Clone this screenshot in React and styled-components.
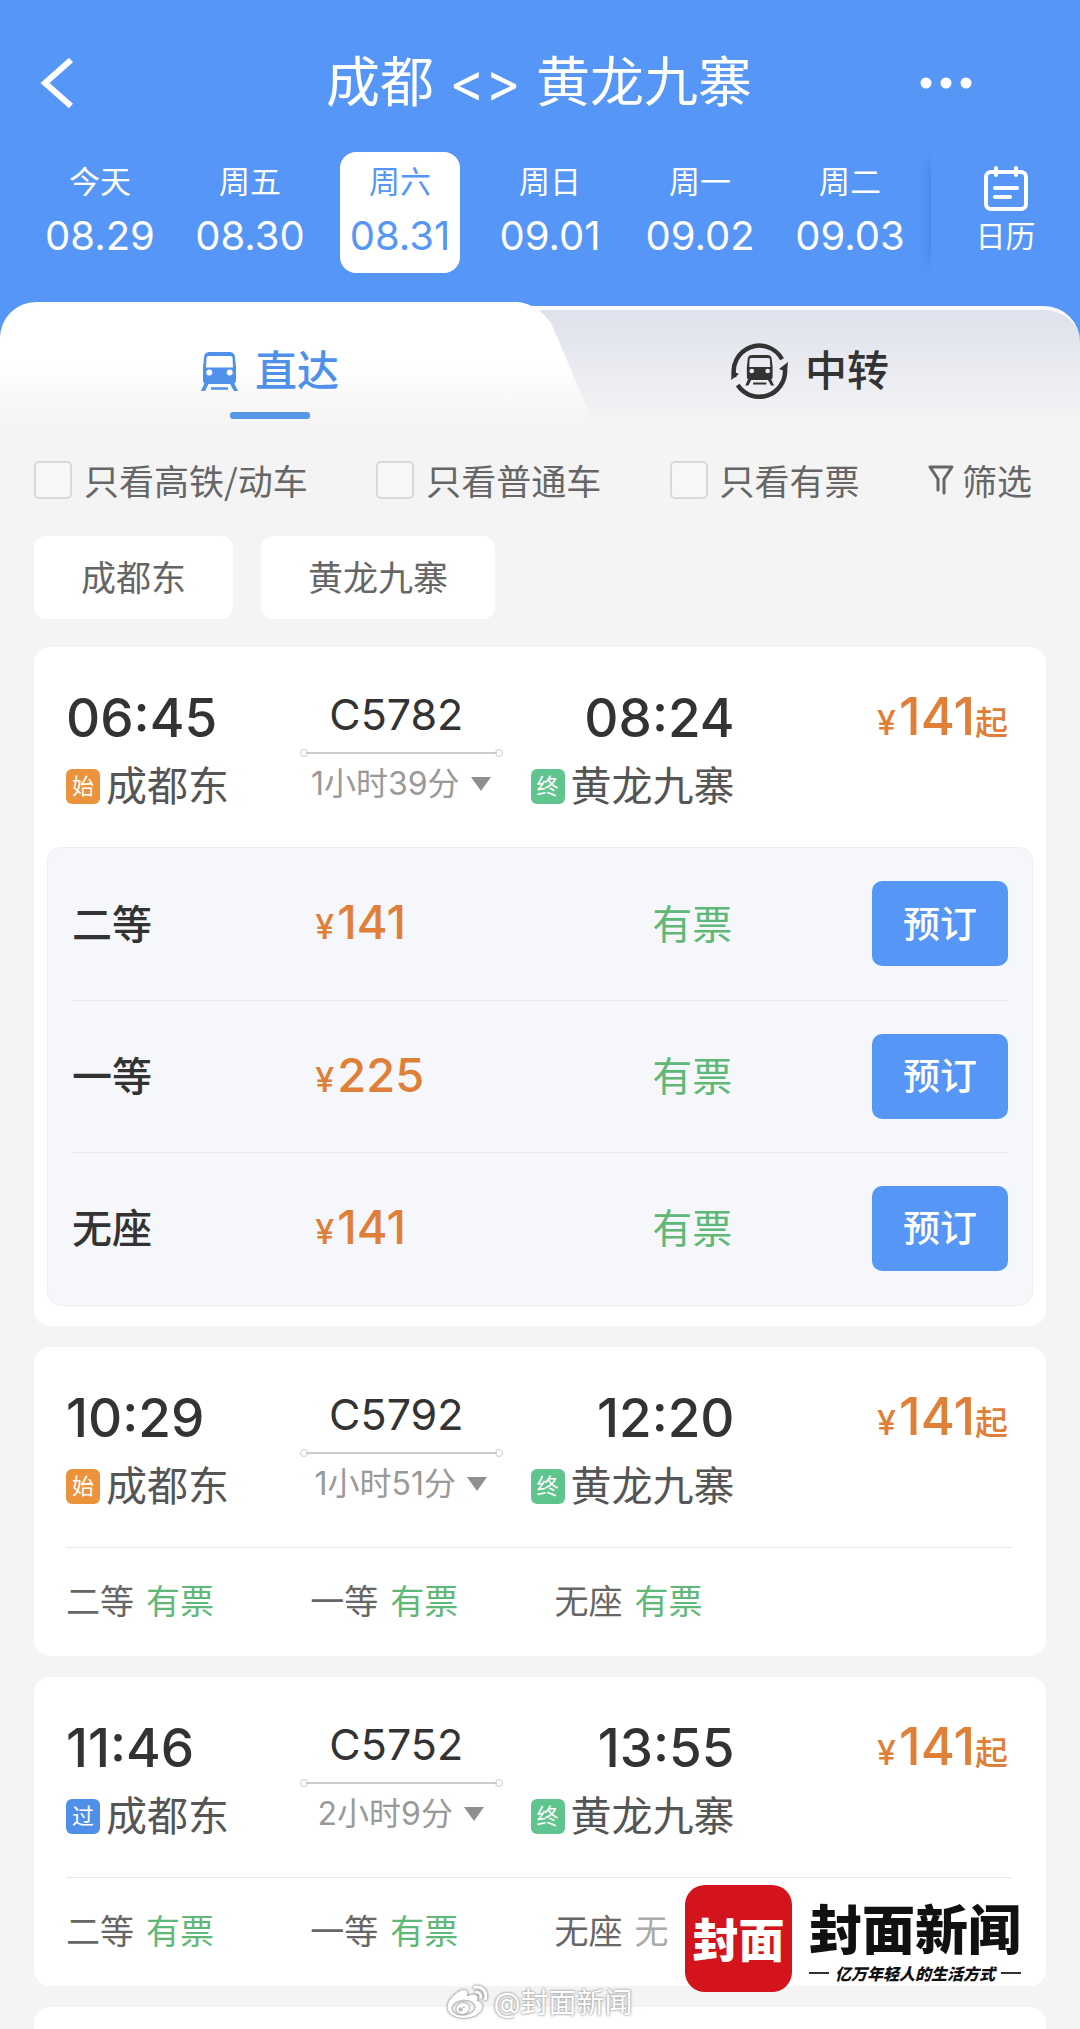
import { useState } from "react";
import styled, { createGlobalStyle, css } from "styled-components";
import { FaWeibo } from "react-icons/fa";

const days = [
  { name: "今天", date: "08.29" },
  { name: "周五", date: "08.30" },
  { name: "周六", date: "08.31" },
  { name: "周日", date: "09.01" },
  { name: "周一", date: "09.02" },
  { name: "周二", date: "09.03" },
];

const filters = ["只看高铁/动车", "只看普通车", "只看有票"];

const stations = ["成都东", "黄龙九寨"];

const trains = [
  {
    code: "C5782",
    start: "06:45",
    end: "08:24",
    duration: "1小时39分",
    mark: "始",
    open: true,
    seats: [
      { name: "二等", price: 141, left: "有票" },
      { name: "一等", price: 225, left: "有票" },
      { name: "无座", price: 141, left: "有票" },
    ],
  },
  {
    code: "C5792",
    start: "10:29",
    end: "12:20",
    duration: "1小时51分",
    mark: "始",
    seats: [
      { name: "二等", left: "有票" },
      { name: "一等", left: "有票" },
      { name: "无座", left: "有票" },
    ],
  },
  {
    code: "C5752",
    start: "11:46",
    end: "13:55",
    duration: "2小时9分",
    mark: "过",
    seats: [
      { name: "二等", left: "有票" },
      { name: "一等", left: "有票" },
      { name: "无座", left: "无" },
    ],
  },
];

const markColors = { 始: "#ea923c", 过: "#4f8fe9", 终: "#5fc48d" };

const TrainShape = () => (
  <>
    <path
      fillRule="evenodd"
      d="M9 0h19c4 0 6 2 6 6l1 9v12c0 4-1 5-5 5H7c-4 0-5-1-5-5V15l1-9c0-4 2-6 6-6zM8 4C6 4 5.500 5 5.500 6L5 15.500h27L31.500 6c0-1-.5-2-2.500-2zM8.300 17.500a3 3 0 1 0 0 6 3 3 0 0 0 0-6zM28.700 17.500a3 3 0 1 0 0 6 3 3 0 0 0 0-6z"
    />
    <path d="M3.500 31H8l-4 8H0zM28.500 31H33l4 8h-4zM10 35.300h17v2.400H10z" />
  </>
);

const TrainIcon = () => (
  <svg width="37" height="39" viewBox="0 0 37 39" fill="currentColor">
    <TrainShape />
  </svg>
);

const TransferIcon = () => (
  <svg width="57" height="57" viewBox="0 0 57 57" fill="none">
    <path
      d="M3.400 34.500A25.700 25.700 0 0 1 51 16.200M6.700 42A25.700 25.700 0 0 0 54 27"
      stroke="currentColor"
      strokeWidth="4.500"
    />
    <path d="M0 37l1-9 7 3zM57 19l-9 7 8 3z" fill="currentColor" />
    <g transform="translate(14.300 12) scale(0.78)" fill="currentColor">
      <TrainShape />
    </g>
  </svg>
);

const BackIcon = () => (
  <svg width="36" height="52" viewBox="0 0 36 52" fill="none">
    <path d="M31 3L5 26l26 23" stroke="#fff" strokeWidth="6" />
  </svg>
);

const MoreIcon = () => (
  <svg width="52" height="12" viewBox="0 0 52 12" fill="#fff">
    <circle cx="6" cy="6" r="5.500" />
    <circle cx="26" cy="6" r="5.500" />
    <circle cx="46" cy="6" r="5.500" />
  </svg>
);

const CalendarIcon = () => (
  <svg
    width="44"
    height="46"
    viewBox="0 0 44 46"
    fill="none"
    stroke="#fff"
    strokeWidth="4"
    strokeLinecap="round"
  >
    <rect x="2" y="6" width="40" height="37" rx="5" />
    <path d="M12 2v7M32 2v7M11 22h22M11 31h15" />
  </svg>
);

const FunnelIcon = () => (
  <svg width="26" height="30" viewBox="0 0 26 30" fill="none">
    <path
      d="M10 25V14L2 2h22l-8 12v14"
      stroke="currentColor"
      strokeWidth="3"
      strokeLinejoin="round"
      strokeLinecap="round"
    />
  </svg>
);

const ArrowIcon = () => (
  <svg width="22" height="14" viewBox="0 0 22 14" fill="#8f8f8f">
    <path d="M1 0h20L11 14z" />
  </svg>
);

const Train = ({ train }) => (
  <Card>
    <Trip>
      <Stop>
        <Time>{train.start}</Time>
        <Station>
          <Mark $color={markColors[train.mark]}>{train.mark}</Mark>成都东
        </Station>
      </Stop>
      <Route>
        <Code>{train.code}</Code>
        <Track />
        <Duration>
          {train.duration}
          <ArrowIcon />
        </Duration>
      </Route>
      <Stop $end>
        <Time>{train.end}</Time>
        <Station>
          <Mark $color={markColors["终"]}>终</Mark>黄龙九寨
        </Station>
      </Stop>
      <From>
        <small>¥</small>
        <b>141</b>
        <span>起</span>
      </From>
    </Trip>
    {train.open ? (
      <Panel>
        <SeatTable>
          <tbody>
            {train.seats.map((seat) => (
              <tr key={seat.name}>
                <SeatName scope="row">{seat.name}</SeatName>
                <SeatPrice>
                  <small>¥</small>
                  {seat.price}
                </SeatPrice>
                <SeatLeft>{seat.left}</SeatLeft>
                <SeatAction>
                  <BookButton type="button">预订</BookButton>
                </SeatAction>
              </tr>
            ))}
          </tbody>
        </SeatTable>
      </Panel>
    ) : (
      <Summary>
        {train.seats.map((seat) => (
          <li key={seat.name}>
            {seat.name}
            <Left $none={seat.left === "无"}>{seat.left}</Left>
          </li>
        ))}
      </Summary>
    )}
  </Card>
);

const App = () => {
  const [day, setDay] = useState("08.31");
  return (
    <>
      <GlobalStyle />
      <Page>
        <Header>
          <TitleBar>
            <IconButton type="button" aria-label="返回">
              <BackIcon />
            </IconButton>
            <h1>成都 &lt;&gt; 黄龙九寨</h1>
            <IconButton type="button" aria-label="更多" $end>
              <MoreIcon />
            </IconButton>
          </TitleBar>
          <DateBar>
            <Days>
              {days.map((d) => (
                <Day
                  key={d.date}
                  type="button"
                  $active={d.date === day}
                  onClick={() => setDay(d.date)}
                >
                  <DayName>{d.name}</DayName>
                  <DayDate>{d.date}</DayDate>
                </Day>
              ))}
            </Days>
            <Calendar type="button">
              <CalendarIcon />
              日历
            </Calendar>
          </DateBar>
        </Header>
        <Tabs>
          <Tab type="button" $active>
            <TrainIcon />
            直达
          </Tab>
          <Tab type="button">
            <TransferIcon />
            中转
          </Tab>
        </Tabs>
        <Filters>
          {filters.map((name) => (
            <Check key={name}>
              <input type="checkbox" />
              {name}
            </Check>
          ))}
          <FilterButton type="button">
            <FunnelIcon />
            筛选
          </FilterButton>
        </Filters>
        <Chips>
          {stations.map((name) => (
            <Chip key={name} type="button">
              {name}
            </Chip>
          ))}
        </Chips>
        <List>
          {trains.map((train) => (
            <Train key={train.code} train={train} />
          ))}
          <Card $blank />
        </List>
        <Brand>
          <BrandLogo>封面</BrandLogo>
          <BrandText>
            <BrandName>封面新闻</BrandName>
            <Slogan>亿万年轻人的生活方式</Slogan>
          </BrandText>
        </Brand>
        <Author>
          <FaWeibo size={40} />
          @封面新闻
        </Author>
      </Page>
    </>
  );
};

const GlobalStyle = createGlobalStyle`
  * {
    box-sizing: border-box;
  }
  body {
    margin: 0;
    background: #f4f4f5;
    font-family: Inter, "Noto Sans CJK SC", sans-serif;
    color: #333;
  }
  button {
    margin: 0;
    padding: 0;
    border: 0;
    background: none;
    font: inherit;
    color: inherit;
    cursor: pointer;
  }
  svg {
    display: block;
    flex: none;
  }
`;

const Page = styled.div`
  position: relative;
  height: 100vh;
  overflow: hidden;
`;

const Header = styled.header`
  padding: 32px 0 29px;
  background: #5596f6;
  color: #fff;
`;

const TitleBar = styled.div`
  display: grid;
  grid-template-columns: 1fr auto 1fr;
  align-items: center;
  height: 102px;
  margin-bottom: 18px;
  padding: 0 108px 0 40px;
  h1 {
    margin: 0 0 0 66px;
    font-size: 54px;
    font-weight: 400;
    line-height: 72px;
  }
`;

const IconButton = styled.button`
  justify-self: ${(p) => (p.$end ? "end" : "start")};
`;

const DateBar = styled.div`
  display: flex;
`;

const Days = styled.div`
  flex: 1;
  display: grid;
  grid-template-columns: repeat(6, 1fr);
  justify-items: center;
  padding: 0 6px 0 25px;
`;

const Day = styled.button`
  display: flex;
  flex-direction: column;
  align-items: center;
  width: 120px;
  padding: 3px 0 10px;
  border-radius: 16px;
  line-height: 54px;
  ${(p) =>
    p.$active &&
    css`
      background: #fff;
      color: #5596f6;
    `}
`;

const DayName = styled.span`
  font-size: 31px;
`;

const DayDate = styled.span`
  font-size: 40px;
`;

const Calendar = styled.button`
  display: flex;
  flex-direction: column;
  align-items: center;
  width: 149px;
  padding-top: 14px;
  box-shadow: -12px 0 12px -12px rgba(30, 80, 170, 0.3);
  font-size: 30px;
  line-height: 48px;
`;

const Tabs = styled.div`
  position: relative;
  z-index: 0;
  display: grid;
  grid-template-columns: 1fr 1fr;
  height: 122px;
  background: linear-gradient(#5596f6 50%, #f4f4f5 50%);
  &::before {
    content: "";
    position: absolute;
    z-index: -1;
    inset: 4px 0 0;
    border-top: 4px solid #fbfcff;
    border-radius: 36px 36px 0 0;
    background: linear-gradient(#dfe2ec, #f4f4f5);
  }
`;

const Tab = styled.button`
  position: relative;
  display: flex;
  align-items: center;
  justify-content: center;
  gap: 17px;
  padding: 32px 0 16px;
  font-size: 42px;
  font-weight: 500;
  line-height: 60px;
  ${(p) =>
    p.$active &&
    css`
      border-radius: 36px 0 0;
      background: linear-gradient(#fff 50%, #f4f4f5) 0 0 / 80% 100% no-repeat;
      color: #4f91ea;
      /* slanted right edge of the selected tab */
      &::before {
        content: "";
        position: absolute;
        z-index: -1;
        inset: 0 -54px 0 50%;
        border-radius: 0 26px 0 0;
        background: linear-gradient(#fff 50%, #f4f4f5);
        transform: skewX(23deg);
        transform-origin: bottom;
      }
      &::after {
        content: "";
        position: absolute;
        bottom: 5px;
        left: calc(50% - 40px);
        width: 80px;
        height: 7px;
        border-radius: 3px;
        background: #5596e6;
      }
    `}
`;

const Filters = styled.div`
  display: flex;
  justify-content: space-between;
  align-items: center;
  padding: 36px 48px 36px 34px;
  font-family: "Noto Sans CJK SC", sans-serif;
  font-size: 35px;
  line-height: 40px;
  color: #666;
`;

const Check = styled.label`
  display: flex;
  align-items: center;
  gap: 12px;
  input {
    appearance: none;
    width: 38px;
    height: 38px;
    margin: 0;
    border: 2px solid #d8d8d8;
    border-radius: 5px;
    background: #f7f7f7;
  }
  input:checked {
    background: #5596f6;
  }
`;

const FilterButton = styled.button`
  display: flex;
  align-items: center;
  gap: 8px;
`;

const Chips = styled.div`
  display: flex;
  gap: 28px;
  padding: 0 34px;
`;

const Chip = styled.button`
  height: 83px;
  padding: 0 47px 4px;
  border-radius: 12px;
  background: #fff;
  font-size: 35px;
  color: #666;
`;

const List = styled.main`
  display: flex;
  flex-direction: column;
  gap: 21px;
  padding: 28px 34px;
`;

const Card = styled.section`
  display: flow-root;
  flex: none;
  border-radius: 16px;
  background: #fff;
  ${(p) => p.$blank && "height: 309px;"}
`;

const Trip = styled.div`
  display: grid;
  grid-template-columns: 234fr 204fr 232fr 274fr;
  height: 200px;
  padding: 37px 38px 0 32px;
`;

const Stop = styled.div`
  display: flex;
  flex-direction: column;
  align-items: ${(p) => (p.$end ? "flex-end" : "flex-start")};
  line-height: 68px;
  white-space: nowrap;
`;

const Time = styled.time`
  font-size: 53px;
  font-weight: 500;
`;

const Station = styled.div`
  display: flex;
  align-items: center;
  gap: 6px;
  font-size: 41px;
  color: #555;
`;

const Mark = styled.span`
  width: 34px;
  height: 35px;
  border-radius: 6px;
  background: ${(p) => p.$color};
  color: #fff;
  font-size: 22px;
  line-height: 35px;
  text-align: center;
`;

const Route = styled.div`
  text-align: center;
`;

const Code = styled.div`
  padding-right: 10px;
  font-size: 43px;
  line-height: 60px;
`;

const Track = styled.div`
  display: flex;
  align-items: center;
  justify-content: space-between;
  margin: 5px 0;
  background: linear-gradient(#ccc, #ccc) center / calc(100% - 12px) 2px
    no-repeat;
  &::before,
  &::after {
    content: "";
    width: 6px;
    height: 6px;
    border: 1px solid #ccc;
    border-radius: 50%;
  }
`;

const Duration = styled.div`
  display: flex;
  align-items: center;
  justify-content: center;
  gap: 10px;
  font-size: 32px;
  line-height: 44px;
  color: #999;
  white-space: nowrap;
`;

const From = styled.div`
  display: flex;
  align-items: baseline;
  justify-content: flex-end;
  line-height: 66px;
  color: #e08038;
  small {
    margin-right: 3px;
    font-size: 34px;
    font-weight: 500;
  }
  b {
    font-size: 52px;
    font-weight: 500;
  }
  span {
    font-size: 33px;
    font-weight: 500;
  }
`;

const Panel = styled.div`
  margin: 0 13px 20px;
  padding: 0 24px 1px;
  border: 1px solid #eceef2;
  border-radius: 14px;
  background: #f6f7fa;
`;

const SeatTable = styled.table`
  width: 100%;
  border-collapse: collapse;
  table-layout: fixed;
  font-size: 40px;
  th,
  td {
    height: 152px;
    padding: 0 0 4px;
    text-align: left;
  }
  tr + tr {
    border-top: 1px solid #e6e8ec;
  }
`;

const SeatName = styled.th`
  width: 26%;
  font-weight: 500;
`;

const SeatPrice = styled.td`
  width: 36%;
  font-size: 47px;
  font-weight: 500;
  color: #e08038;
  small {
    margin-right: 3px;
    font-size: 34px;
  }
`;

const SeatLeft = styled.td`
  width: 20%;
  color: #5fb878;
`;

const SeatAction = styled.td`
  && {
    padding: 0;
    text-align: right;
  }
`;

const BookButton = styled.button`
  width: 136px;
  height: 85px;
  padding-bottom: 4px;
  border-radius: 10px;
  background: #5596f6;
  color: #fff;
  font-size: 37px;
  font-weight: 500;
`;

const Summary = styled.ul`
  display: grid;
  grid-template-columns: 244fr 244fr 457fr;
  margin: 0 34px 0 32px;
  padding: 0;
  border-top: 1px solid #e6e6e6;
  list-style: none;
  font-size: 34px;
  line-height: 108px;
  color: #666;
`;

const Left = styled.span`
  margin-left: 12px;
  color: ${(p) => (p.$none ? "#aaa" : "#5fb878")};
`;

const Brand = styled.div`
  position: absolute;
  right: 59px;
  bottom: 37px;
  display: flex;
  align-items: center;
  gap: 17px;
  color: #111;
  font-family: "Noto Sans CJK SC", sans-serif;
  font-weight: 900;
`;

const BrandLogo = styled.div`
  width: 107px;
  height: 107px;
  border-radius: 20px;
  background: #d3141c;
  color: #fff;
  font-size: 46px;
  line-height: 104px;
  text-align: center;
`;

const BrandText = styled.div`
  display: flex;
  flex-direction: column;
`;

const BrandName = styled.strong`
  font-size: 53px;
  font-weight: 900;
  line-height: 68px;
`;

const Slogan = styled.div`
  display: flex;
  align-items: center;
  gap: 6px;
  font-size: 16px;
  line-height: 24px;
  font-style: italic;
  &::before,
  &::after {
    content: "";
    flex: 1;
    height: 2px;
    background: #333;
  }
`;

const Author = styled.div`
  position: absolute;
  bottom: 6px;
  left: 50%;
  display: flex;
  align-items: center;
  gap: 6px;
  transform: translateX(-50%);
  color: #fff;
  font-size: 28px;
  line-height: 40px;
  text-shadow: 0 0 3px #999, 0 0 2px #999;
  svg {
    filter: drop-shadow(0 0 1px #999) drop-shadow(0 0 1px #aaa);
  }
`;

export default App;
